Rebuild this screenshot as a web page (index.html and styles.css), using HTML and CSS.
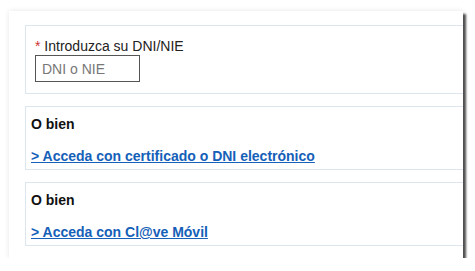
FILE: index.html
```html
<!DOCTYPE html>
<html lang="es">
<head>
<meta charset="utf-8">
<title>Acceso</title>
<link rel="stylesheet" href="styles.css">
</head>
<body>
<div class="frame">
  <div class="box box-input">
    <label class="label" for="dni"><span class="req">*</span> Introduzca su DNI/NIE</label>
    <input class="field" id="dni" type="text" placeholder="DNI o NIE">
  </div>
  <div class="box box-alt">
    <div class="title">O bien</div>
    <a class="link" href="#">&gt; Acceda con certificado o DNI electrónico</a>
  </div>
  <div class="box box-alt">
    <div class="title">O bien</div>
    <a class="link" href="#">&gt; Acceda con Cl@ve Móvil</a>
  </div>
</div>
</body>
</html>
```
FILE: styles.css
```css
html, body {
  margin: 0;
  padding: 0;
  background: #ffffff;
}
body {
  font-family: "Liberation Sans", Arial, sans-serif;
  font-size: 14px;
  line-height: 16px;
  color: #111;
}
.frame {
  margin: 11px 0 0 9px;
  width: 454px;
  height: 247px;
  box-sizing: border-box;
  padding: 14px 0 0 16px;
  background: #fff;
  display: flex;
  flex-direction: column;
  gap: 12px;
  box-shadow: 3px 3px 2px rgba(50, 50, 50, 0.85), 0 0 5px rgba(0, 0, 0, 0.10);
}
.box {
  border: 1px solid #dde6ef;
  border-right: none;
  background: #fff;
  display: flex;
  flex-direction: column;
  align-items: flex-start;
}
.box-input {
  padding: 12px 9px 11px 9px;
  gap: 1px;
}
.req {
  color: #cc3333;
}
.label {
  color: #222;
}
.field {
  box-sizing: border-box;
  width: 105px;
  height: 27px;
  border: 1px solid #555;
  padding: 0 6px;
  margin: 0;
  font-family: "Liberation Sans", Arial, sans-serif;
  font-size: 14px;
  color: #222;
  outline: none;
}
.field::placeholder {
  color: #777;
}
.box-alt {
  padding: 9px 5px 5px 5px;
  gap: 16px;
}
.title {
  font-weight: bold;
  color: #111;
}
.link {
  font-weight: bold;
  color: #1560b8;
  text-decoration: underline;
}
```
